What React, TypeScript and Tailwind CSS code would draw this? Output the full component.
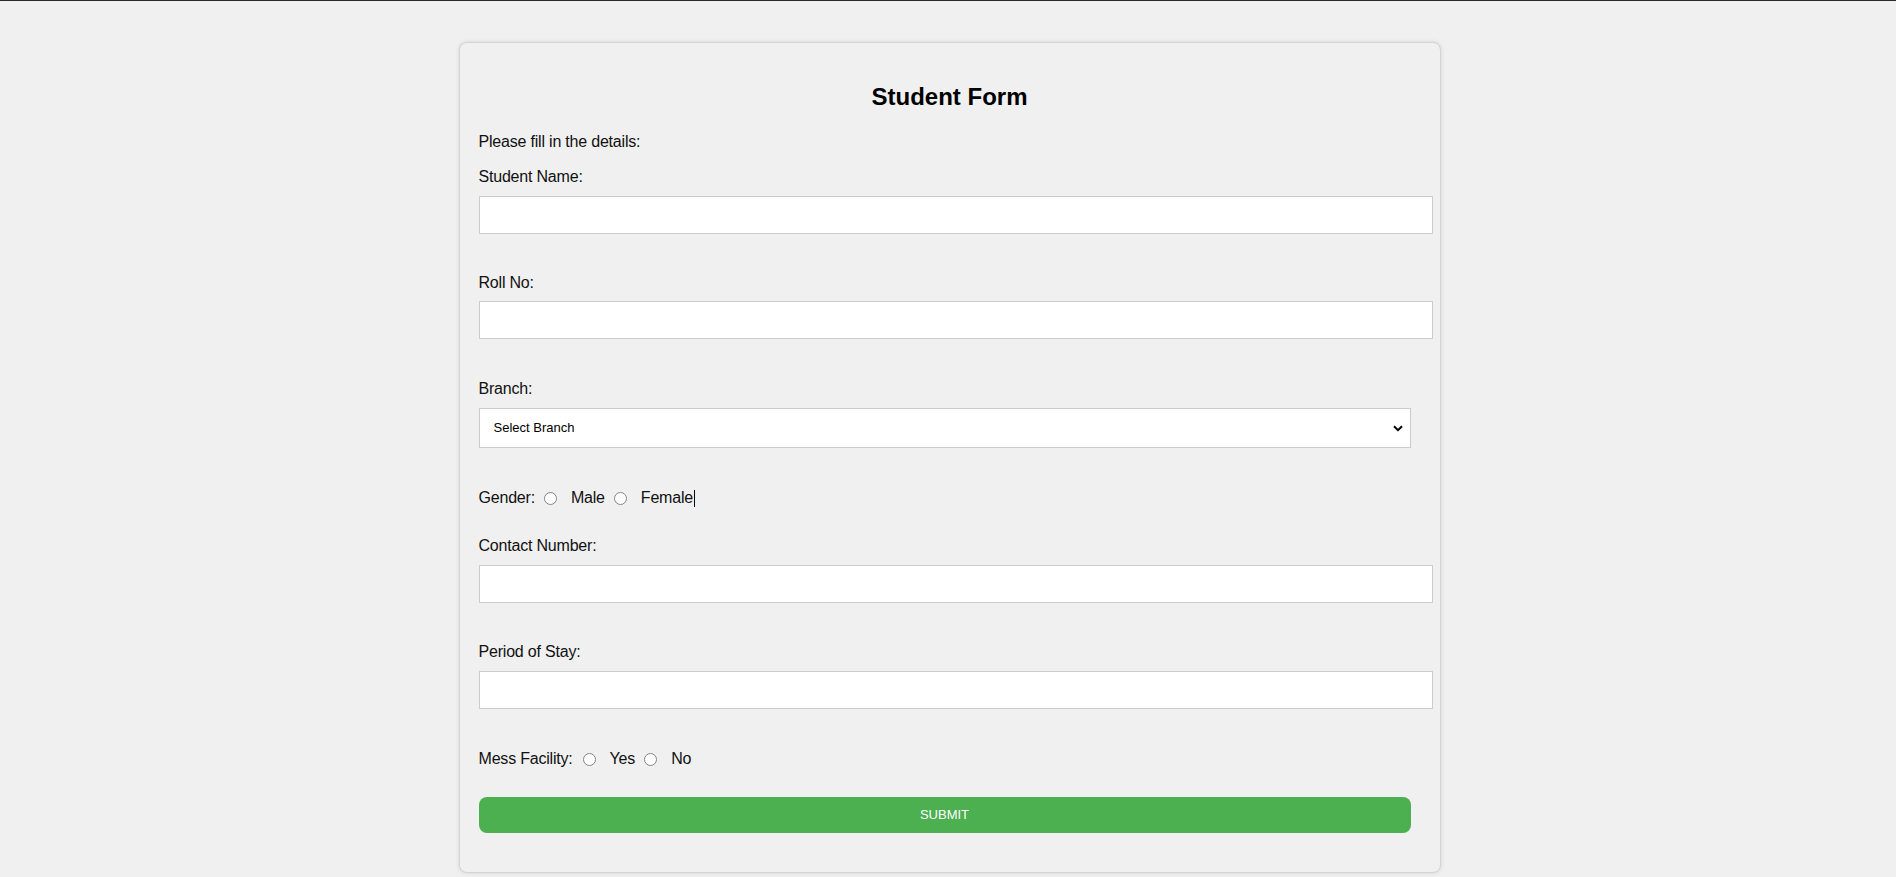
import React from "react";

function Radio() {
  return (
    <span className="inline-block w-[13px] h-[13px] rounded-full border border-[#858585] bg-white shrink-0" />
  );
}

function Label({ children, className = "" }: { children: React.ReactNode; className?: string }) {
  return (
    <div className={`text-[16px] leading-[18px] tracking-[-0.2px] text-[#111] ${className}`}>{children}</div>
  );
}

function TextInput({ className = "" }: { className?: string }) {
  return (
    <input
      type="text"
      className={`block w-[954px] h-[38px] border border-[#cccccc] bg-white px-[10px] text-[13px] outline-none ${className}`}
    />
  );
}

export default function App() {
  return (
    <div className="min-h-[877px] bg-[#f0f0f0] font-['Liberation_Sans',Arial,sans-serif] text-black">
      <div className="h-px bg-[#2a2a2a]" />
      <div className="flex justify-center pl-[3px]">
        <div className="mt-[41px] w-[982px] rounded-lg border border-[#d4d4d4] bg-[#f0f0f0] shadow-[0_0_4px_rgba(0,0,0,0.12)] px-[19px] pt-[40px] pb-[39px]">
          <h2 className="text-center text-[24px] leading-[28px] font-bold">Student Form</h2>
          <Label className="mt-[22px]">Please fill in the details:</Label>

          <Label className="mt-[17px]">Student Name:</Label>
          <TextInput className="mt-[10px]" />

          <Label className="mt-[40px]">Roll No:</Label>
          <TextInput className="mt-[9px]" />

          <Label className="mt-[41px]">Branch:</Label>
          <div className="relative mt-[10px] w-[932px]">
            <select className="block w-full h-[40px] appearance-none border border-[#cccccc] bg-white pl-[14px] text-[13px] text-black outline-none">
              <option>Select Branch</option>
            </select>
            <svg
              className="pointer-events-none absolute right-[8px] top-[17px]"
              width="10"
              height="7"
              viewBox="0 0 10 7"
            >
              <path d="M1 1.2 L5 5.2 L9 1.2" fill="none" stroke="#000" strokeWidth="2" />
            </svg>
          </div>

          <div className="mt-[41px] flex h-[18px] items-center text-[16px] tracking-[-0.2px] text-[#111]">
            <span>Gender:</span>
            <span className="ml-[9px] flex"><Radio /></span>
            <span className="ml-[14px]">Male</span>
            <span className="ml-[9px] flex"><Radio /></span>
            <span className="ml-[14px]">Female</span>
            <span className="ml-px inline-block h-[17px] w-px bg-black" />
          </div>

          <Label className="mt-[30px]">Contact Number:</Label>
          <TextInput className="mt-[10px]" />

          <Label className="mt-[40px]">Period of Stay:</Label>
          <TextInput className="mt-[10px]" />

          <div className="mt-[41px] flex h-[18px] items-center text-[16px] tracking-[-0.2px] text-[#111]">
            <span>Mess Facility:</span>
            <span className="ml-[10px] flex"><Radio /></span>
            <span className="ml-[14px]">Yes</span>
            <span className="ml-[9px] flex"><Radio /></span>
            <span className="ml-[14px]">No</span>
          </div>

          <button
            type="button"
            className="mt-[29px] block h-[36px] w-[932px] rounded-lg bg-[#4caf50] text-[13px] text-white"
          >
            SUBMIT
          </button>
        </div>
      </div>
    </div>
  );
}
